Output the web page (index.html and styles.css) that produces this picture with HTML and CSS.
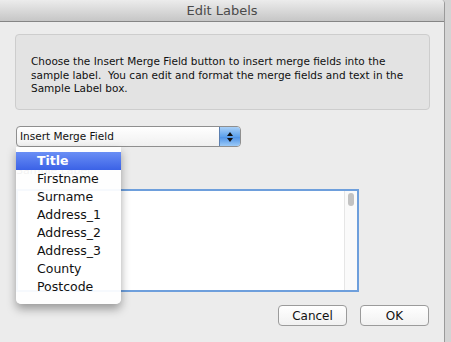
FILE: index.html
```html
<!DOCTYPE html>
<html lang="en">

<head>
    <meta charset="utf-8">
    <title>Edit Labels</title>
    <link rel="stylesheet" href="styles.css">
</head>

<body>

    <div class="vindue">
        <div class="titelbar">Edit Labels</div>

        <div class="indhold">
            <div class="infoboks">
                <p>Choose the Insert Merge Field button to insert merge fields into the sample label.&nbsp; You can edit and format the merge fields and text in the Sample Label box.</p>
            </div>

            <div class="popup">
                <span class="popupTekst">Insert Merge Field</span>
                <span class="pile">
                    <svg width="8" height="12" viewBox="0 0 8 12">
                        <path d="M4 1 L7 5 L1 5 Z" fill="#111" />
                        <path d="M4 11 L7 7 L1 7 Z" fill="#111" />
                    </svg>
                </span>
            </div>

            <div class="etiket">Sample Label:</div>

            <div class="tekstfelt">
                <div class="rullebar"><div class="rulleknap"></div></div>
            </div>

            <div class="knapper">
                <button class="knap">Cancel</button>
                <button class="knap">OK</button>
            </div>

            <ul class="menu">
                <li class="valgt">Title</li>
                <li>Firstname</li>
                <li>Surname</li>
                <li>Address_1</li>
                <li>Address_2</li>
                <li>Address_3</li>
                <li>County</li>
                <li>Postcode</li>
            </ul>
        </div>
    </div>

</body>

</html>
```

FILE: styles.css
```css
body {
    margin: 0;
    background-color: #d4d4d4;
    font-family: 'DejaVu Sans', sans-serif;
    color: #111;
}

.vindue {
    width: 444px;
    height: 342px;
    background-color: #ececec;
    border-right: 1px solid #9a9a9a;
    border-top-right-radius: 4px;
    overflow: hidden;
}

.titelbar {
    height: 21px;
    line-height: 22px;
    text-align: center;
    font-size: 13px;
    color: #4a4a4a;
    background: linear-gradient(#ececec, #c6c6c6);
    border-bottom: 1px solid #858585;
}

.indhold {
    position: relative;
    padding: 12px 0 0 15px;
}

.infoboks {
    width: 413px;
    height: 74px;
    background-color: #e3e3e3;
    border: 1px solid #cdcdcd;
    border-radius: 4px;
}

.infoboks p {
    margin: 0;
    padding: 20px 14px 0 15px;
    font-size: 10.5px;
    line-height: 13.5px;
}

.popup {
    display: flex;
    width: 223px;
    height: 19px;
    margin: 16px 0 0 1px;
    border: 1px solid #8f8f8f;
    border-radius: 4px;
    background: linear-gradient(#ffffff, #f0f0f0);
    overflow: hidden;
}

.popupTekst {
    flex: 1;
    font-size: 10.5px;
    line-height: 19px;
    padding-left: 3px;
}

.pile {
    width: 20px;
    display: flex;
    align-items: center;
    justify-content: center;
    background: linear-gradient(#a9d0f7, #5ea2ec 50%, #4a90e6 51%, #9ccaf7);
    border-left: 1px solid #5b7fb0;
}

.etiket {
    margin: 17px 0 0 1px;
    font-size: 11px;
    color: #222;
}

.tekstfelt {
    position: relative;
    width: 339px;
    height: 99px;
    margin: 12px 0 0 1px;
    background-color: #fff;
    border: 2px solid #6e9fdc;
}

.rullebar {
    position: absolute;
    top: 0;
    right: 0;
    width: 12px;
    height: 100%;
    border-left: 1px solid #e6e6e6;
    background-color: #fafafa;
}

.rulleknap {
    width: 6px;
    height: 13px;
    margin: 2px 0 0 3px;
    background-color: #c2c2c2;
    border-radius: 3px;
}

.knapper {
    display: flex;
    justify-content: flex-end;
    gap: 13px;
    padding-right: 15px;
    margin-top: 13px;
}

.knap {
    height: 21px;
    padding: 0;
    font-family: 'DejaVu Sans', sans-serif;
    font-size: 12px;
    color: #111;
    background: linear-gradient(#ffffff, #f1f1f1);
    border: 1px solid #9b9b9b;
    border-radius: 4px;
    width: 69px;
}

.menu {
    position: absolute;
    top: 125px;
    left: 16px;
    width: 105px;
    margin: 0;
    padding: 5px 0 8px;
    list-style: none;
    background-color: rgba(255, 255, 255, 0.94);
    border-radius: 0 0 5px 5px;
    box-shadow: 0 5px 10px rgba(0, 0, 0, 0.35);
}

.menu li {
    height: 18px;
    line-height: 18px;
    padding-left: 21px;
    font-size: 12.5px;
}

.menu .valgt {
    color: #fff;
    font-weight: bold;
    background: linear-gradient(#6a8ff5, #3b62e6);
}
```
